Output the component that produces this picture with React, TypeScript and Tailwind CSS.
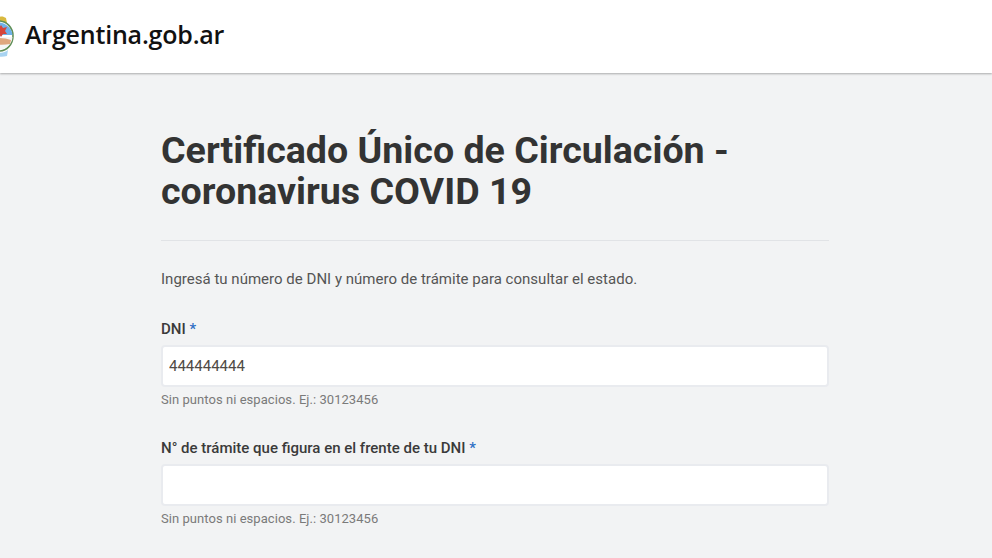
const inputCls = "h-[42px] w-full rounded border-2 border-[#e9ebef] bg-white px-[6px] text-[15px] text-[#4f4a45] outline-none";

function Escudo() {
  return (
    <svg viewBox="0 0 15 44" className="h-[44px] w-[15px] shrink-0" aria-hidden="true">
      {/* sun and crown above the oval */}
      <path d="M-6 10 C-3 3 2 2 6 5 L7 10Z" fill="#d9b93f" />
      <ellipse cx="-1" cy="23" rx="14" ry="15" fill="#fff" stroke="#5f8f57" strokeWidth="1.6" />
      <path d="M-13 22 C-13 15 -7 9.5 -1 9.5 C5 9.5 12 15 12.5 22Z" fill="#6fb1e8" />
      <path d="M-13 24 H12.5 C12 31 6 36.5 -1 36.5 C-7 36.5 -13 31 -13 24Z" fill="#f5f6f7" />
      {/* red cap */}
      <path d="M1 12 L3 15 L7 14 L5 18 L7 21 L3 21 L1 24 L-1 21 L-5 21 L-3 18 L-5 14 L-1 15Z" fill="#d6443a" />
      {/* hands */}
      <path d="M-10 27 C-4 24 4 25 11 27 L10 31 C4 32 -4 32 -10 30Z" fill="#dfa77f" />
      {/* ribbon under the oval */}
      <path d="M-4 38 C0 41 4 40 8 37 L7 43 C3 44 0 44 -4 43Z" fill="#a9d4f2" />
    </svg>
  );
}

function Field({ label, value }: { label: string; value?: string }) {
  return (
    <div className="flex flex-col">
      <label className="mb-[6px] text-[15px] leading-[20px] font-medium text-[#3a3a3a]">
        {label} <span className="text-[#2f6fc4]">*</span>
      </label>
      <input className={inputCls} defaultValue={value} />
      <p className="mt-[5px] text-[13px] leading-[16px] tracking-[0.05px] text-[#7a7a7a]">Sin puntos ni espacios. Ej.: 30123456</p>
    </div>
  );
}

export default function App() {
  return (
    <div className="h-[558px] w-[992px] overflow-hidden bg-[#f2f3f4] font-['Roboto',sans-serif]">
      <header className="flex h-[73px] items-center gap-[10px] bg-white pb-[4px] shadow-[0_1px_2px_rgba(0,0,0,0.3)]">
        <Escudo />
        <span className="font-['Open_Sans',sans-serif] text-[25px] leading-none font-semibold tracking-[-0.2px] text-[#111]">Argentina.gob.ar</span>
      </header>
      <main className="ml-[161px] w-[668px] pt-[57px]">
        <h1 className="text-[37.6px] leading-[41px] font-bold text-[#333]">Certificado Único de Circulación - coronavirus COVID 19</h1>
        <hr className="mt-[28px] border-[#e1e3e6]" />
        <p className="mt-[28px] text-[15px] leading-[20px] tracking-[0.015px] text-[#555]">Ingresá tu número de DNI y número de trámite para consultar el estado.</p>
        <div className="mt-[30px] flex flex-col gap-[30px]">
          <Field label="DNI" value="444444444" />
          <Field label="N° de trámite que figura en el frente de tu DNI" />
        </div>
      </main>
    </div>
  );
}
